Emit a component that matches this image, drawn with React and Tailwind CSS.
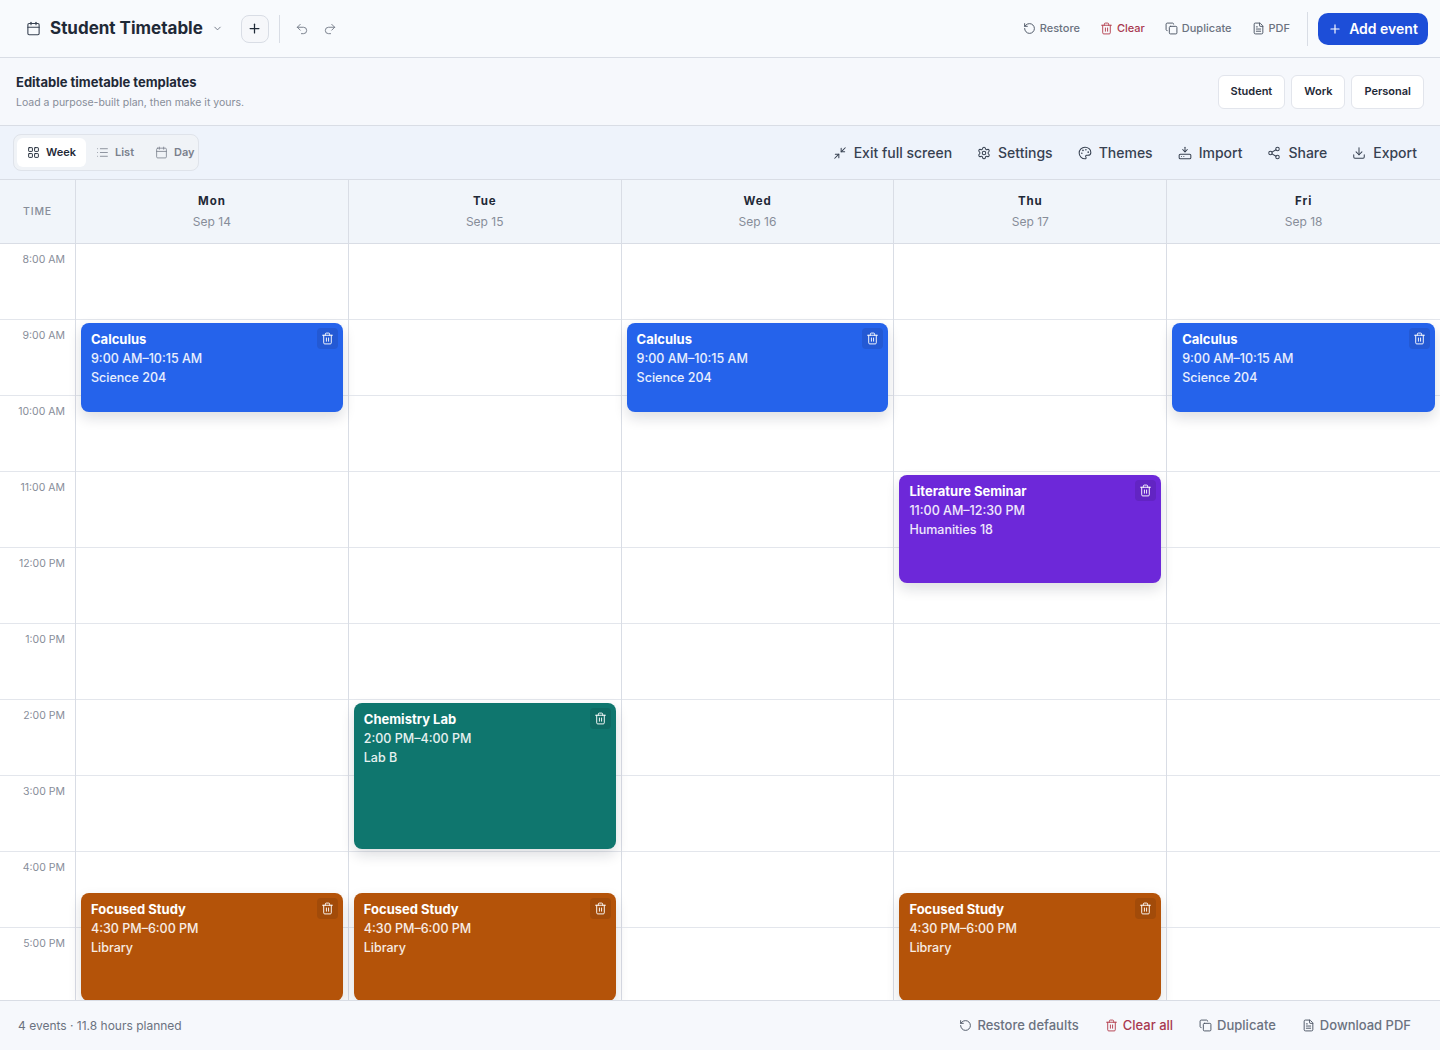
import React from 'react';
import {
  Calendar, ChevronDown, Plus, Undo2, Redo2, RotateCcw, Trash2, Copy, FileText,
  LayoutGrid, List, Minimize2, Settings, Palette, HardDriveDownload, Share2, Download,
} from 'lucide-react';

const hours = ['8:00 AM', '9:00 AM', '10:00 AM', '11:00 AM', '12:00 PM', '1:00 PM', '2:00 PM', '3:00 PM', '4:00 PM', '5:00 PM', '6:00 PM'];

const calculus = { title: 'Calculus', time: '9:00 AM–10:15 AM', place: 'Science 204', top: 'top-[79px]', height: 'h-[89px]', color: 'bg-[#2563eb]', btn: 'bg-[#2359d4]' };
const study = { title: 'Focused Study', time: '4:30 PM–6:00 PM', place: 'Library', top: 'top-[649px]', height: 'h-[108px]', color: 'bg-[#b45309]', btn: 'bg-[#a24b09]' };

const days = [
  { name: 'Mon', date: 'Sep 14', events: [calculus, study] },
  {
    name: 'Tue',
    date: 'Sep 15',
    events: [
      { title: 'Chemistry Lab', time: '2:00 PM–4:00 PM', place: 'Lab B', top: 'top-[459px]', height: 'h-[146px]', color: 'bg-[#0f766e]', btn: 'bg-[#0e6a63]' },
      study,
    ],
  },
  { name: 'Wed', date: 'Sep 16', events: [calculus] },
  {
    name: 'Thu',
    date: 'Sep 17',
    events: [
      { title: 'Literature Seminar', time: '11:00 AM–12:30 PM', place: 'Humanities 18', top: 'top-[231px]', height: 'h-[108px]', color: 'bg-[#6d28d9]', btn: 'bg-[#6224c3]' },
      study,
    ],
  },
  { name: 'Fri', date: 'Sep 18', events: [calculus] },
];

const EventCard = ({ event }) => (
  <div className={`absolute left-[5px] right-[5px] ${event.top} ${event.height} ${event.color} rounded-lg px-[10px] pt-[7px] text-white shadow-[0_6px_14px_rgba(15,23,42,0.14)]`}>
    <div className="text-[13px] font-bold leading-[19px]">{event.title}</div>
    <div className="text-[12.5px] font-medium leading-[19px] text-white/90">{event.time}</div>
    <div className="text-[12.5px] font-medium leading-[19px] text-white/90">{event.place}</div>
    <button className={`absolute top-[5px] right-[5px] w-[21px] h-[21px] rounded flex items-center justify-center ${event.btn}`}>
      <Trash2 className="w-[13px] h-[13px]" strokeWidth={1.75} />
    </button>
  </div>
);

const TopAction = ({ icon: Icon, label, danger }) => (
  <button className={`flex items-center gap-[4px] text-[11px] font-medium ${danger ? 'text-[#a8384f]' : 'text-[#6b7280]'}`}>
    <Icon className={`w-[13px] h-[13px] ${danger ? 'text-[#b5404f]' : 'text-[#4b5563]'}`} strokeWidth={1.75} />
    {label}
  </button>
);

const ToolAction = ({ icon: Icon, label }) => (
  <button className="flex items-center gap-[7px] text-[14px] font-medium text-[#374151]">
    <Icon className="w-[14px] h-[14px]" strokeWidth={1.75} />
    {label}
  </button>
);

const FootAction = ({ icon: Icon, label, danger }) => (
  <button className={`flex items-center gap-[5px] text-[13px] font-medium ${danger ? 'text-[#a8384f]' : 'text-[#6b7280]'}`}>
    <Icon className={`w-[13px] h-[13px] ${danger ? 'text-[#b5404f]' : 'text-[#4b5563]'}`} strokeWidth={1.75} />
    {label}
  </button>
);

const TemplateButton = ({ label }) => (
  <button className="h-[34px] px-[12px] bg-white border border-[#e2e5ec] rounded-md text-[11px] font-semibold text-[#1f2937]">{label}</button>
);

export default function App() {
  return (
    <div className="h-[1050px] w-full flex flex-col overflow-hidden bg-white font-['Inter',sans-serif] text-[#111827]">
      {/* Top bar */}
      <header className="h-[58px] shrink-0 flex items-center justify-between pl-[26px] pr-[12px] bg-[#f8fafd] border-b border-[#d9dde5]">
        <div className="flex items-center">
          <Calendar className="w-[15px] h-[15px] text-[#374151]" strokeWidth={1.75} />
          <span className="ml-[9px] text-[17px] font-bold text-[#1f2937]">Student Timetable</span>
          <ChevronDown className="ml-[9px] w-[11px] h-[11px] text-[#6b7280]" />
          <button className="ml-[18px] w-[28px] h-[28px] rounded-lg border border-[#d9dde5] bg-[#f6f7fa] flex items-center justify-center">
            <Plus className="w-[15px] h-[15px] text-[#1f2937]" strokeWidth={2} />
          </button>
          <div className="ml-[10px] w-px h-[28px] bg-[#d9dde5]" />
          <Undo2 className="ml-[15px] w-[14px] h-[14px] text-[#6b7280]" strokeWidth={1.5} />
          <Redo2 className="ml-[14px] w-[14px] h-[14px] text-[#6b7280]" strokeWidth={1.5} />
        </div>
        <div className="flex items-center">
          <div className="flex items-center gap-[20px]">
            <TopAction icon={RotateCcw} label="Restore" />
            <TopAction icon={Trash2} label="Clear" danger />
            <TopAction icon={Copy} label="Duplicate" />
            <TopAction icon={FileText} label="PDF" />
          </div>
          <div className="ml-[17px] mr-[10px] w-px h-[34px] bg-[#d9dde5]" />
          <button className="h-[32px] w-[110px] rounded-[10px] bg-[#1d4ed8] flex items-center justify-center gap-[7px] text-[14px] font-semibold text-white">
            <Plus className="w-[14px] h-[14px]" strokeWidth={2} />
            Add event
          </button>
        </div>
      </header>

      {/* Templates */}
      <section className="h-[68px] shrink-0 flex items-center justify-between pl-[16px] pr-[16px] bg-[#f6f8fc] border-b border-[#d9dde5]">
        <div>
          <div className="text-[13px] font-bold leading-[18px] text-[#1f2937]">Editable timetable templates</div>
          <div className="mt-[5px] text-[10.5px] leading-[14px] text-[#878d99]">Load a purpose-built plan, then make it yours.</div>
        </div>
        <div className="flex items-center gap-[6px]">
          <TemplateButton label="Student" />
          <TemplateButton label="Work" />
          <TemplateButton label="Personal" />
        </div>
      </section>

      {/* Toolbar */}
      <section className="h-[54px] shrink-0 flex items-center justify-between pl-[13px] pr-[23px] bg-[#eef3fb] border-b border-[#d9dde5]">
        <div className="h-[37px] flex items-center p-[3px] rounded-lg border border-[#dfe3ea] bg-[#f0f3f7]">
          <button className="h-[29px] w-[69px] rounded-md bg-white flex items-center justify-center gap-[6px] text-[11px] font-semibold text-[#1f2937]">
            <LayoutGrid className="w-[13px] h-[13px]" strokeWidth={1.75} />
            Week
          </button>
          <button className="ml-[10px] flex items-center gap-[6px] text-[11px] font-semibold text-[#7a808c]">
            <List className="w-[13px] h-[13px]" strokeWidth={1.5} />
            List
          </button>
          <button className="ml-[21px] flex items-center gap-[6px] text-[11px] font-semibold text-[#7a808c]">
            <Calendar className="w-[13px] h-[13px]" strokeWidth={1.5} />
            Day
          </button>
        </div>
        <div className="flex items-center gap-[25px]">
          <ToolAction icon={Minimize2} label="Exit full screen" />
          <ToolAction icon={Settings} label="Settings" />
          <ToolAction icon={Palette} label="Themes" />
          <ToolAction icon={HardDriveDownload} label="Import" />
          <ToolAction icon={Share2} label="Share" />
          <ToolAction icon={Download} label="Export" />
        </div>
      </section>

      {/* Grid header */}
      <div className="h-[64px] shrink-0 grid grid-cols-[76px_repeat(5,1fr)] bg-[#f1f5fa] border-b border-[#d9dde5]">
        <div className="flex items-center justify-center border-r border-[#d9dde5] text-[10.5px] font-medium tracking-[0.08em] text-[#878d99]">TIME</div>
        {days.map((day) => (
          <div key={day.name} className="flex flex-col items-center pt-[13px] border-r border-[#d9dde5] last:border-r-0">
            <div className="text-[11.5px] font-bold leading-[16px] tracking-[0.08em] text-[#1f2937]">{day.name}</div>
            <div className="mt-[5px] text-[12px] leading-[16px] text-[#878d99]">{day.date}</div>
          </div>
        ))}
      </div>

      {/* Calendar body */}
      <div className="flex-1 min-h-0 overflow-hidden grid grid-cols-[76px_repeat(5,1fr)]">
        <div className="border-r border-[#d9dde5]">
          {hours.map((hour) => (
            <div key={hour} className="h-[76px] pt-[9px] pr-[10px] text-right text-[10.5px] leading-[14px] text-[#878d99] border-b border-[#e3e6ec]">{hour}</div>
          ))}
        </div>
        {days.map((day) => (
          <div key={day.name} className="relative border-r border-[#d9dde5] last:border-r-0">
            {hours.map((hour) => (
              <div key={hour} className="h-[76px] border-b border-[#e3e6ec]" />
            ))}
            {day.events.map((event) => (
              <EventCard key={event.title} event={event} />
            ))}
          </div>
        ))}
      </div>

      {/* Footer */}
      <footer className="h-[50px] shrink-0 flex items-center justify-between pl-[18px] pr-[29px] bg-[#f6f8fc] border-t border-[#d9dde5]">
        <span className="text-[12px] text-[#6b7280]">4 events · 11.8 hours planned</span>
        <div className="flex items-center gap-[26px]">
          <FootAction icon={RotateCcw} label="Restore defaults" />
          <FootAction icon={Trash2} label="Clear all" danger />
          <FootAction icon={Copy} label="Duplicate" />
          <FootAction icon={FileText} label="Download PDF" />
        </div>
      </footer>
    </div>
  );
}
